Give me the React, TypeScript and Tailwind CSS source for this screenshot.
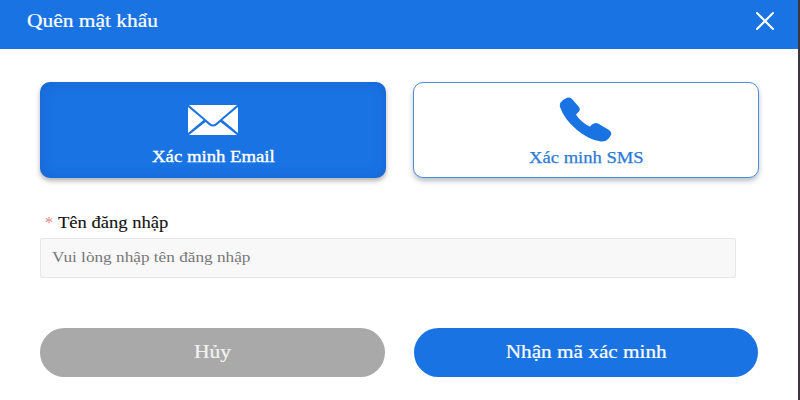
import { X } from "lucide-react";

const serif = "font-['Liberation_Serif',serif]";

function MailIcon() {
  return (
    <svg width="50" height="30" viewBox="0 0 50 30" className="block">
      <path d="M1 0H49L27.5 18.5Q25 20.5 22.5 18.5Z" fill="#fff" />
      <path d="M0 2L15.5 15L0 28Z" fill="#fff" />
      <path d="M50 2L34.5 15L50 28Z" fill="#fff" />
      <path d="M17.5 17L21 20Q25 23 29 20L32.5 17L49 30H1Z" fill="#fff" />
    </svg>
  );
}

function PhoneIcon() {
  return (
    <svg width="54" height="45" viewBox="0 0 54 45" className="block">
      <path
        d="M1 10Q0 6 4 3L8 .8Q11 -.4 13 2L20 10Q22 13 19 15.5L17 17.5Q19 21 23 24.5Q27 28 31 29.5L33 27.5Q36 25 39 26.5L50 33Q53 35 52 38L50 41Q47 45 42 44.5Q30 43 18 33Q5 22 1 10Z"
        fill="#1a73e3"
      />
    </svg>
  );
}

export default function App() {
  return (
    <div className={`flex h-[400px] w-[800px] overflow-hidden bg-white ${serif}`}>
      <div className="w-[798px]">
        <div className="flex h-[49px] items-center justify-between bg-[#1a73e3] pl-[27px] pr-[17px] text-white">
          <span className="mb-[6px] origin-left scale-x-[1.19] text-[18px] [-webkit-text-stroke:0.2px_white]">
            Quên mật khẩu
          </span>
          <X size={32} strokeWidth={1.5} className="mb-[7px]" />
        </div>

        <div className="flex flex-col pl-[40px]">
          <div className="mt-[33px] flex gap-[27px]">
            <div className="flex h-[96px] w-[346px] flex-col items-center rounded-[10px] bg-[#1a73e3] pt-[23px] text-white shadow-[0_3px_5px_rgba(0,0,0,0.3),inset_0_0_14px_rgba(0,40,120,0.18)]">
              <MailIcon />
              <span className="mt-[12px] scale-x-[1.17] text-[16px] leading-[20px] [-webkit-text-stroke:0.35px_white]">
                Xác minh Email
              </span>
            </div>
            <div className="flex h-[96px] w-[346px] flex-col items-center rounded-[10px] border border-[#4a8fdc] bg-white pt-[14px] text-[#2c7bd6] shadow-[0_3px_5px_rgba(20,40,80,0.3)]">
              <PhoneIcon />
              <span className="mt-[6px] scale-x-[1.16] text-[16px] leading-[20px] [-webkit-text-stroke:0.25px_#2c7bd6]">
                Xác minh SMS
              </span>
            </div>
          </div>

          <div className="mt-[35px] flex h-[20px] items-center pl-[5px] text-[16px] text-[#111]">
            <span className="mr-[5px] text-[#f58080]">*</span>
            <span className="origin-left scale-x-[1.16] [-webkit-text-stroke:0.1px_#111]">Tên đăng nhập</span>
          </div>

          <div className="mt-[5px] flex h-[40px] w-[696px] items-center rounded-[2px] border border-[#e8e8e8] bg-[#f8f8f8] pb-[2px] pl-[11px] text-[14px] text-[#777]">
            <span className="origin-left scale-x-[1.23]">Vui lòng nhập tên đăng nhập</span>
          </div>

          <div className="mt-[50px] flex gap-[29px]">
            <div className="flex h-[49px] w-[345px] items-center justify-center rounded-full bg-[#a9a9a9] text-[18px] text-[#f2f2f2]">
              <span className="scale-x-[1.2] [-webkit-text-stroke:0.2px_#f2f2f2]">Hủy</span>
            </div>
            <div className="flex h-[49px] w-[344px] items-center justify-center rounded-full bg-[#1a73e3] text-[18px] text-white">
              <span className="scale-x-[1.18] [-webkit-text-stroke:0.2px_white]">Nhận mã xác minh</span>
            </div>
          </div>
        </div>
      </div>
      <div className="w-[2px] bg-[#3a3540]" />
    </div>
  );
}
